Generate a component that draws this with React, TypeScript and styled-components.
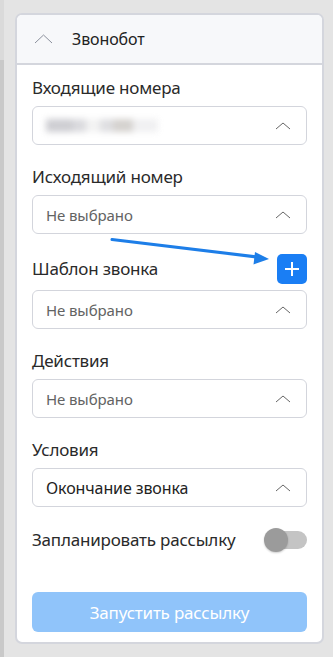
import styled, { createGlobalStyle } from 'styled-components';

const GlobalStyle = createGlobalStyle`
  html, body {
    margin: 0;
    padding: 0;
    background: #e4e4e4;
    font-family: "Noto Sans", "Liberation Sans", sans-serif;
  }
`;

const Page = styled.div`
  position: relative;
  width: 333px;
  height: 657px;
  display: flex;
  overflow: hidden;
`;

const Strip = styled.div`
  width: 4px;
  flex-shrink: 0;
  background: linear-gradient(to bottom, #dadada 0, #dadada 60px, #c9c9c9 60px);
`;

const Card = styled.section`
  margin: 13px 0 0 11px;
  width: 309px;
  height: 631px;
  box-sizing: border-box;
  border: 2px solid #d4d6dd;
  border-radius: 7px;
  background: #fff;
  overflow: hidden;
  display: flex;
  flex-direction: column;
`;

const Header = styled.header`
  height: 48px;
  flex-shrink: 0;
  display: flex;
  align-items: center;
  gap: 19px;
  padding-left: 17px;
  background: #f7f8fa;
  border-bottom: 2px solid #d4d6dd;
  h2 {
    margin: 0;
    font-size: 16px;
    font-weight: 400;
    color: #222;
    letter-spacing: -0.1px;
  }
`;

const Body = styled.div`
  flex: 1;
  display: flex;
  flex-direction: column;
  padding: 11px 15px 10px;
`;

const Field = styled.div<{ $first?: boolean }>`
  display: flex;
  flex-direction: column;
  gap: 6px;
  margin-top: ${(p) => (p.$first ? 0 : 20)}px;
`;

const Label = styled.label`
  font-size: 17px;
  line-height: 24px;
  color: #2a2a2a;
  letter-spacing: -0.2px;
`;

const LabelRow = styled.div`
  height: 30px;
  display: flex;
  align-items: center;
  justify-content: space-between;
`;

const Select = styled.div`
  height: 39px;
  box-sizing: border-box;
  border: 1px solid #d3d5dc;
  border-radius: 6px;
  display: flex;
  align-items: center;
  justify-content: space-between;
  padding: 0 15px 0 13px;
`;

const Value = styled.span<{ $empty?: boolean }>`
  font-size: ${(p) => (p.$empty ? 15 : 16)}px;
  color: ${(p) => (p.$empty ? '#636363' : '#222')};
  letter-spacing: -0.1px;
`;

const Blurred = styled.span`
  display: block;
  width: 112px;
  height: 13px;
  filter: blur(3px);
  background: linear-gradient(
    to right,
    #bdbdc3 0 24%,
    #cdcdd2 24% 36%,
    #eee 36% 48%,
    #d3d3d7 48% 60%,
    #c6c2be 60% 78%,
    #ebebed 78%
  );
  opacity: 0.75;
`;

const PlusButton = styled.button`
  width: 30px;
  height: 30px;
  border: none;
  border-radius: 5px;
  background: #1a7ef4;
  display: flex;
  align-items: center;
  justify-content: center;
  padding: 0;
`;

const ToggleRow = styled.div`
  margin-top: 21px;
  height: 24px;
  display: flex;
  align-items: center;
  justify-content: space-between;
`;

const Toggle = styled.div`
  position: relative;
  width: 43px;
  height: 24px;
  &::before {
    content: '';
    position: absolute;
    right: 0;
    top: 3px;
    width: 37px;
    height: 18px;
    border-radius: 9px;
    background: #c4c4c4;
  }
  &::after {
    content: '';
    position: absolute;
    left: 0;
    top: 0;
    width: 24px;
    height: 24px;
    border-radius: 50%;
    background: #9b9b9b;
    box-shadow: 0 1px 2px rgba(0, 0, 0, 0.2);
  }
`;

const Submit = styled.button`
  margin-top: auto;
  height: 40px;
  border: none;
  border-radius: 6px;
  background: #90c4fa;
  color: #fff;
  font-family: inherit;
  font-size: 17px;
  letter-spacing: -0.2px;
`;

const Pointer = styled.svg`
  position: absolute;
  left: 0;
  top: 0;
  pointer-events: none;
`;

const Chevron = ({ w, h, color }: { w: number; h: number; color: string }) => (
  <svg width={w} height={h + 2} viewBox={`0 0 ${w} ${h + 2}`}>
    <path d={`M1 ${h + 1} L${w / 2} 1 L${w - 1} ${h + 1}`} fill="none" stroke={color} strokeWidth="1" />
  </svg>
);

const SelectBox = ({ value }: { value?: string }) => (
  <Select>
    <Value $empty={!value}>{value ?? 'Не выбрано'}</Value>
    <Chevron w={16} h={6} color="#666" />
  </Select>
);

const App = () => {
  return (
    <Page>
      <GlobalStyle />
      <Strip />
      <Card>
        <Header>
          <Chevron w={19} h={8} color="#8b909c" />
          <h2>Звонобот</h2>
        </Header>
        <Body>
          <Field $first>
            <Label>Входящие номера</Label>
            <Select>
              <Blurred />
              <Chevron w={16} h={6} color="#666" />
            </Select>
          </Field>
          <Field>
            <Label>Исходящий номер</Label>
            <SelectBox />
          </Field>
          <Field>
            <LabelRow>
              <Label>Шаблон звонка</Label>
              <PlusButton>
                <svg width="16" height="16" viewBox="0 0 16 16">
                  <path d="M8 1v14M1 8h14" stroke="#fff" strokeWidth="2" />
                </svg>
              </PlusButton>
            </LabelRow>
            <SelectBox />
          </Field>
          <Field>
            <Label>Действия</Label>
            <SelectBox />
          </Field>
          <Field>
            <Label>Условия</Label>
            <SelectBox value="Окончание звонка" />
          </Field>
          <ToggleRow>
            <Label>Запланировать рассылку</Label>
            <Toggle />
          </ToggleRow>
          <Submit>Запустить рассылку</Submit>
        </Body>
      </Card>
      <Pointer width="333" height="657" viewBox="0 0 333 657">
        <path d="M112 239.5 L257 257" stroke="#1d7ee8" strokeWidth="3" strokeLinecap="round" />
        <path d="M269 259 L255 252 L253.5 264.5 Z" fill="#1d7ee8" />
      </Pointer>
    </Page>
  );
};

export default App;
